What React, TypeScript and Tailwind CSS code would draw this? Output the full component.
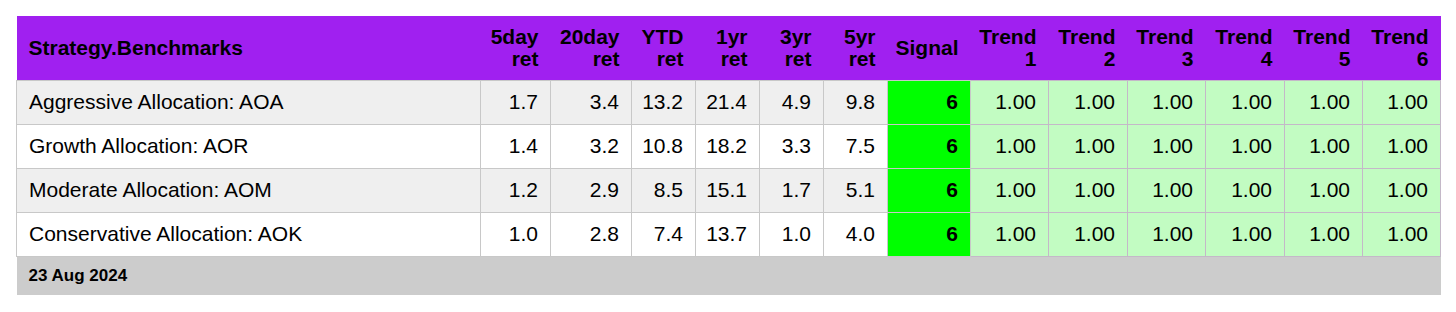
const rows = [
  { name: "Aggressive Allocation: AOA", vals: ["1.7", "3.4", "13.2", "21.4", "4.9", "9.8"] },
  { name: "Growth Allocation: AOR", vals: ["1.4", "3.2", "10.8", "18.2", "3.3", "7.5"] },
  { name: "Moderate Allocation: AOM", vals: ["1.2", "2.9", "8.5", "15.1", "1.7", "5.1"] },
  { name: "Conservative Allocation: AOK", vals: ["1.0", "2.8", "7.4", "13.7", "1.0", "4.0"] },
];

const widths = [464, 70, 81, 64, 64, 64, 64, 83, 78, 79, 78, 79, 78, 78];

const retHeads = [
  ["5day", "ret"],
  ["20day", "ret"],
  ["YTD", "ret"],
  ["1yr", "ret"],
  ["3yr", "ret"],
  ["5yr", "ret"],
];

const trends = [1, 2, 3, 4, 5, 6];

export default function App() {
  return (
    <div className="bg-white w-[1456px] h-[312px] pt-4 pl-4 font-['Liberation_Sans',Arial,sans-serif]">
      <table className="table-fixed border-collapse w-[1424px] text-[21px] leading-[22px] text-black">
        <colgroup>
          {widths.map((w, i) => (
            <col key={i} style={{ width: w }} />
          ))}
        </colgroup>
        <thead>
          <tr className="bg-[#a020f0] h-[64px] font-bold">
            <th className="text-left pl-3 font-bold">Strategy.Benchmarks</th>
            {retHeads.map(([a, b]) => (
              <th key={a} className="text-right pr-3 font-bold">
                {a}
                <br />
                {b}
              </th>
            ))}
            <th className="text-right pr-3 font-bold">Signal</th>
            {trends.map((t) => (
              <th key={t} className="text-right pr-3 font-bold">
                Trend
                <br />
                {t}
              </th>
            ))}
          </tr>
        </thead>
        <tbody>
          {rows.map((r, i) => (
            <tr key={r.name} className={i % 2 === 0 ? "bg-[#efefef] h-[44px]" : "bg-white h-[44px]"}>
              <td className="border border-[#c8c8c8] pl-3">{r.name}</td>
              {r.vals.map((v, j) => (
                <td key={j} className="border border-[#c8c8c8] text-right pr-3">
                  {v}
                </td>
              ))}
              <td className="border border-[#c8c8c8] bg-[#00ff00] text-right pr-3 font-bold">6</td>
              {trends.map((t) => (
                <td key={t} className="border border-[#c4b8c8] bg-[#c2fcc2] text-right pr-3">
                  1.00
                </td>
              ))}
            </tr>
          ))}
          <tr className="bg-[#cccccc] h-[39px]">
            <td colSpan={14} className="pl-3 text-[17px] font-bold">
              23 Aug 2024
            </td>
          </tr>
        </tbody>
      </table>
    </div>
  );
}
